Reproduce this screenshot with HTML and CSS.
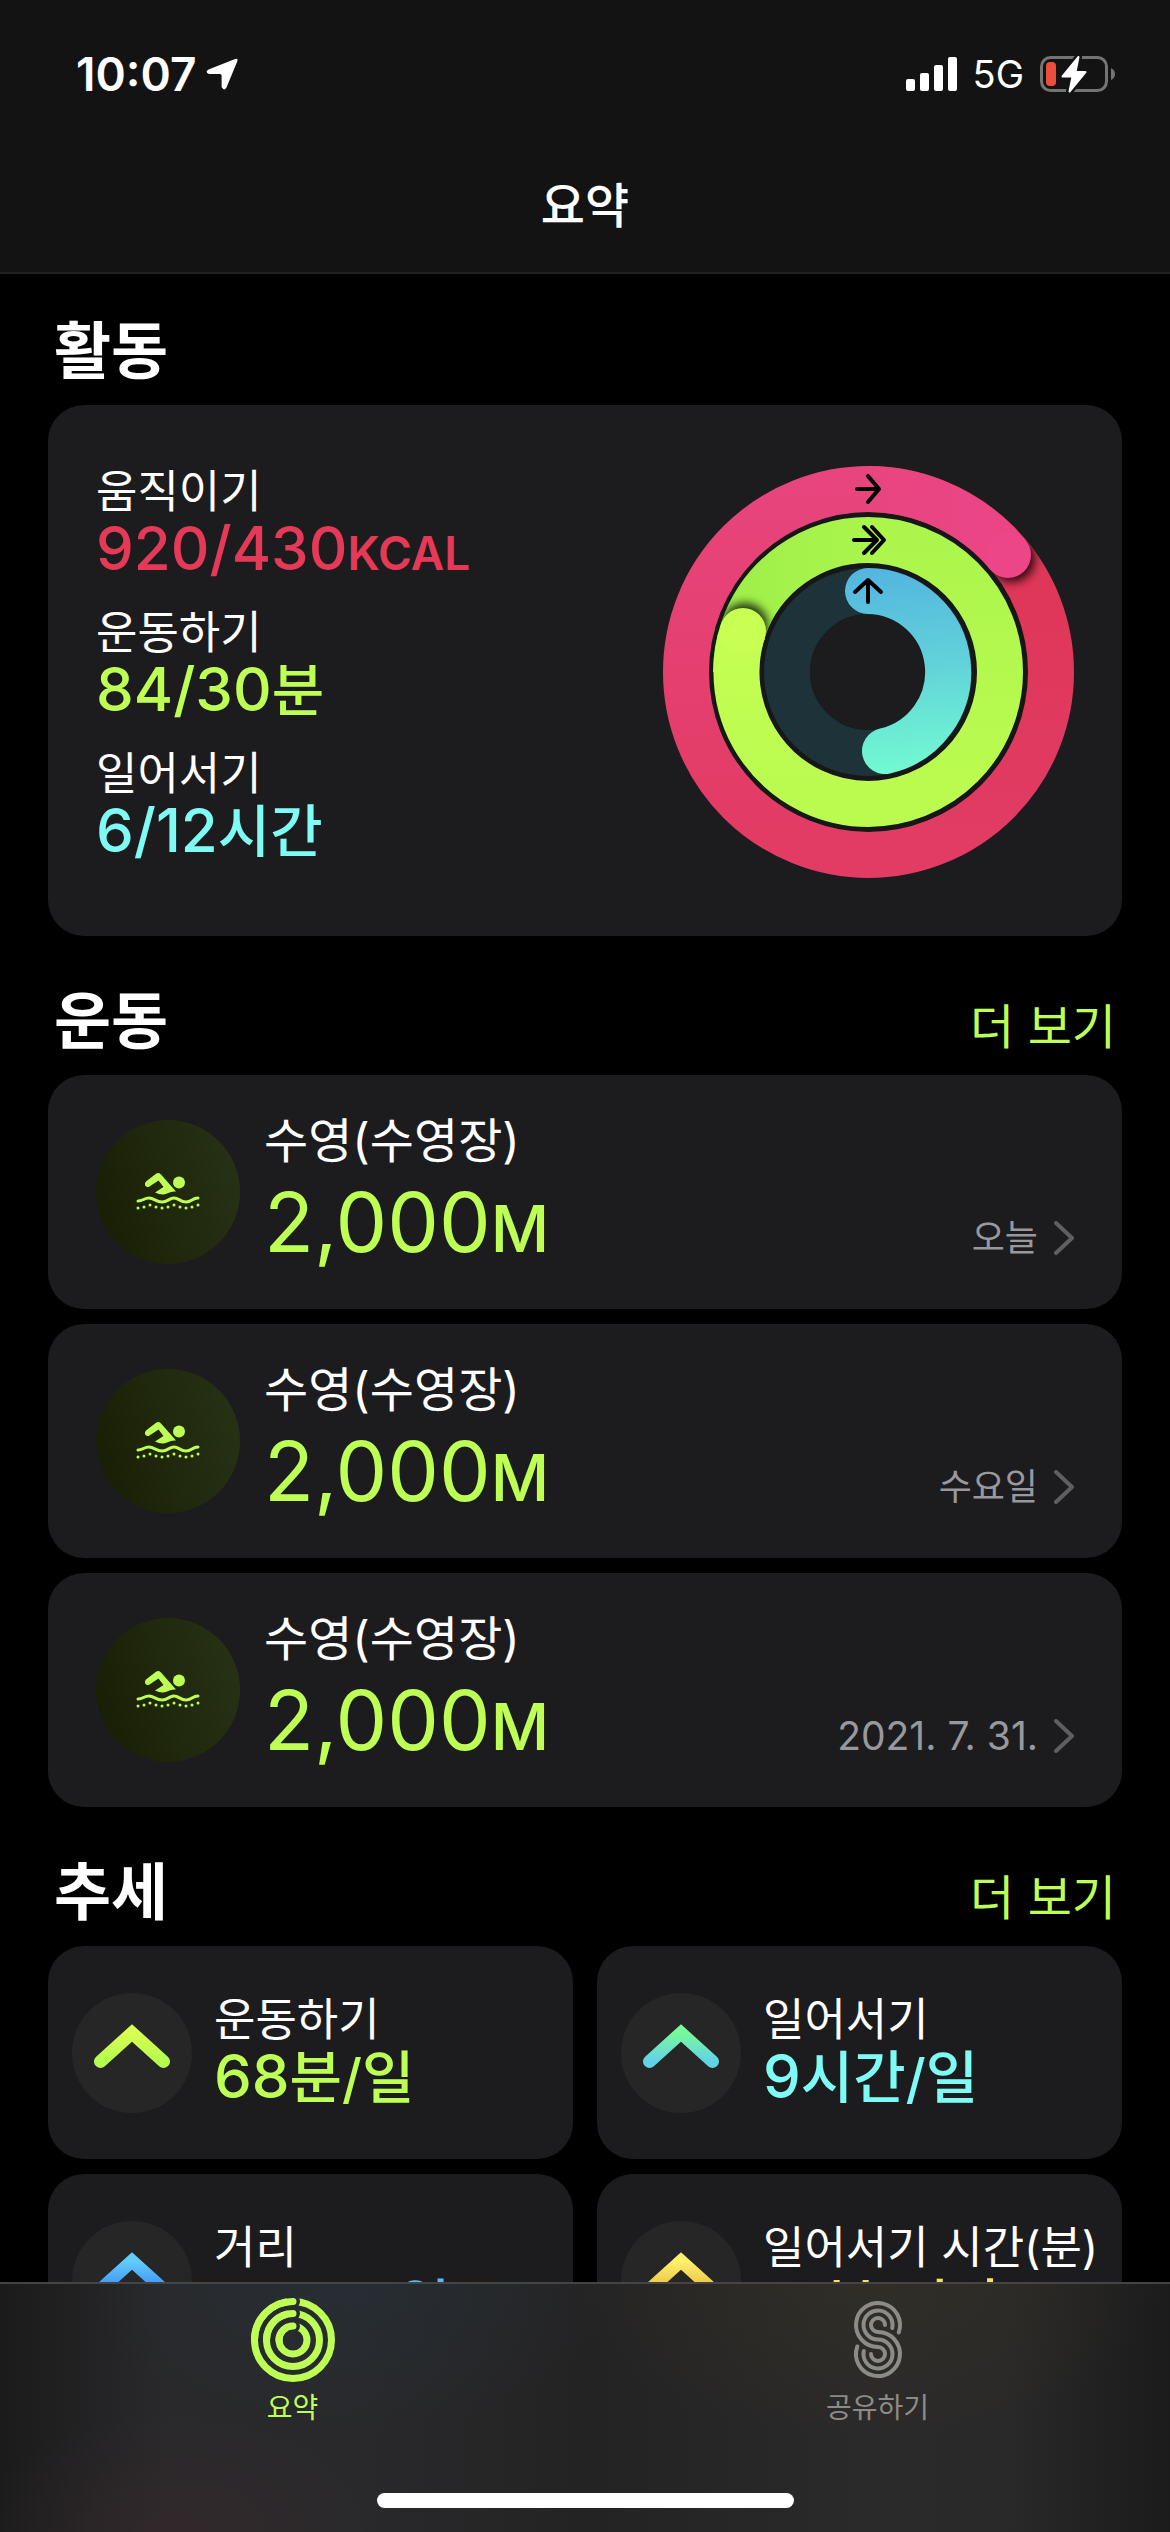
FILE: index.html
```html
<!DOCTYPE html>
<html lang="ko">
<head>
<meta charset="utf-8">
<meta name="viewport" content="width=device-width, initial-scale=1">
<title>요약</title>
<link rel="stylesheet" href="styles.css">
</head>
<body>
<svg class="defs" aria-hidden="true">
  <defs>
    <symbol id="swim" viewBox="0 0 64 40">
      <g fill="none" stroke="currentColor" stroke-linecap="round">
        <path d="M2 29 C7 29 8 26 13 26 S20 30 26 30 S33 26 38 26 S44 30 50 30 S56 26 62 26" stroke-width="3"/>
        <path d="M2 36h0M8 35h0M14 33h0M20 35h0M26 36h0M32 35h0M38 33h0M44 35h0M50 36h0M56 35h0M62 33h0" stroke-width="3"/>
      </g>
      <circle cx="43" cy="10.500" r="6" fill="currentColor"/>
      <path d="M10 9.500 L20 1.800 Q22.500 0 25 2.500 L40 19.500 Q36 19 31 21.500 T19 20.500 L27.500 15 L22.500 8.500 L13.500 14.500 Q10 16 9 13 Q8.500 11 10 9.500Z" fill="currentColor"/>
    </symbol>
    <symbol id="chevron" viewBox="0 0 20 34">
      <path d="M2 2L18 17L2 32" fill="none" stroke="currentColor" stroke-width="4" stroke-linecap="round" stroke-linejoin="round"/>
    </symbol>
    <linearGradient id="lime" x1="0" y1="0" x2="0" y2="1"><stop offset="0" stop-color="#d8ff52"/><stop offset="1" stop-color="#b4fa50"/></linearGradient>
    <linearGradient id="aqua" x1="0" y1="0" x2="0" y2="1"><stop offset="0" stop-color="#78f99a"/><stop offset="1" stop-color="#62d2e8"/></linearGradient>
    <linearGradient id="blue" x1="0" y1="0" x2="0" y2="1"><stop offset="0" stop-color="#60cdfa"/><stop offset="1" stop-color="#3f8cf5"/></linearGradient>
    <linearGradient id="gold" x1="0" y1="0" x2="0" y2="1"><stop offset="0" stop-color="#fff06c"/><stop offset="1" stop-color="#e8c040"/></linearGradient>
  </defs>
</svg>

<div class="app">
  <header class="top">
    <div class="status">
      <div class="status-side">
        <span class="clock">10:07</span>
        <svg class="locate" viewBox="0 0 32 32"><path d="M28.500 1.200Q32.500 -.5 31.200 3.500L20.500 29.500Q18 33.500 15.600 29V17.500Q15.600 16 14 16H3Q-1.500 14 2.500 11.500Z" fill="#fff"/></svg>
      </div>
      <div class="status-side">
        <svg class="signal" viewBox="0 0 51 34" fill="#fff"><rect x="0" y="22" width="9" height="12" rx="2"/><rect x="14" y="16" width="9" height="18" rx="2"/><rect x="28" y="8" width="9" height="26" rx="2"/><rect x="42" y="0" width="9" height="34" rx="2"/></svg>
        <span class="network">5G</span>
        <svg class="battery" viewBox="0 0 76 40">
          <rect x="1.500" y="3.500" width="65" height="33" rx="9" fill="none" stroke="#747474" stroke-width="3"/>
          <path d="M71 14Q75 16 75 20T71 26Z" fill="#747474"/>
          <rect x="6" y="8" width="10" height="24" rx="4" fill="#eb4e3d"/>
          <path d="M38.500 3L22.500 22.500H32.500L29.500 37.500L45.500 18H35.500Z" fill="#131313" stroke="#131313" stroke-width="7" stroke-linejoin="round"/>
          <path d="M38.500 3L22.500 22.500H32.500L29.500 37.500L45.500 18H35.500Z" fill="#fff" stroke="#fff" stroke-width="2" stroke-linejoin="round"/>
        </svg>
      </div>
    </div>
    <h1 class="title">요약</h1>
  </header>

  <main class="content">
    <section class="section">
      <div class="section-head"><h2>활동</h2></div>
      <article class="card activity">
        <dl class="metrics">
          <div class="metric"><dt>움직이기</dt><dd class="move">920/430<span class="unit">KCAL</span></dd></div>
          <div class="metric"><dt>운동하기</dt><dd class="exercise">84/30<span class="ko">분</span></dd></div>
          <div class="metric"><dt>일어서기</dt><dd class="stand">6/12<span class="ko">시간</span></dd></div>
        </dl>
        <svg class="rings" viewBox="21 26 412 412" role="img" aria-label="활동 링">
          <defs>
            <linearGradient id="m1" gradientUnits="userSpaceOnUse" x1="0" y1="100" x2="0" y2="392"><stop offset="0" stop-color="#de3656"/><stop offset="1" stop-color="#e23b64"/></linearGradient>
            <linearGradient id="m2" gradientUnits="userSpaceOnUse" x1="0" y1="26" x2="0" y2="392"><stop offset="0" stop-color="#e8457f"/><stop offset="1" stop-color="#e23b64"/></linearGradient>
            <linearGradient id="m3" gradientUnits="userSpaceOnUse" x1="227" y1="0" x2="390" y2="0"><stop offset="0" stop-color="#e8457f"/><stop offset="1" stop-color="#ec4588"/></linearGradient>
            <linearGradient id="e1" gradientUnits="userSpaceOnUse" x1="0" y1="77" x2="0" y2="341"><stop offset="0" stop-color="#aaf54c"/><stop offset="1" stop-color="#bbfb50"/></linearGradient>
            <linearGradient id="e2" gradientUnits="userSpaceOnUse" x1="0" y1="170" x2="0" y2="341"><stop offset="0" stop-color="#c7ff53"/><stop offset="1" stop-color="#bbfb50"/></linearGradient>
            <linearGradient id="e3" gradientUnits="userSpaceOnUse" x1="90" y1="0" x2="227" y2="0"><stop offset="0" stop-color="#9fef4a"/><stop offset="1" stop-color="#aaf54c"/></linearGradient>
            <linearGradient id="s1" gradientUnits="userSpaceOnUse" x1="227" y1="128" x2="244" y2="334"><stop offset="0" stop-color="#53b5e0"/><stop offset=".5" stop-color="#62d3d9"/><stop offset="1" stop-color="#72fad2"/></linearGradient>
            <clipPath id="c1"><path clip-rule="evenodd" d="M227 26a206 206 0 1 1 0 412a206 206 0 1 1 0-412ZM227 72a160 160 0 1 0 0 320a160 160 0 1 0 0-320Z"/></clipPath>
            <clipPath id="c2"><path clip-rule="evenodd" d="M227 77a155 155 0 1 1 0 310a155 155 0 1 1 0-310ZM227 123a109 109 0 1 0 0 218a109 109 0 1 0 0-218Z"/></clipPath>
            <filter id="soft" x="-50%" y="-50%" width="200%" height="200%"><feGaussianBlur stdDeviation="5"/></filter>
          </defs>
          <circle cx="227" cy="232" r="165" fill="#171717"/>
          <circle cx="227" cy="232" r="58" fill="#1c1c1e"/>
          <g fill="none" stroke-width="46">
            <path d="M227 49A183 183 0 0 1 227 415" stroke="url(#m1)"/>
            <g clip-path="url(#c1)"><circle cx="371" cy="119" r="23" fill="#000" stroke="none" opacity=".8" filter="url(#soft)"/></g>
            <path d="M228 415A183 183 0 0 1 228 49" stroke="url(#m2)"/>
            <path d="M227 49A183 183 0 0 1 367 115" stroke="url(#m3)"/>
            <circle cx="367" cy="115" r="23" fill="#ec4588" stroke="none"/>
            <path d="M102 190A132 132 0 0 1 228 100" stroke="url(#e3)"/>
            <path d="M95 232A132 132 0 0 1 102 190" stroke="#9fef4a"/>
            <g clip-path="url(#c2)"><circle cx="104" cy="186" r="23" fill="#000" stroke="none" opacity=".8" filter="url(#soft)"/></g>
            <path d="M227 100A132 132 0 0 1 227 364" stroke="url(#e1)"/>
            <path d="M228 364A132 132 0 0 1 102 191" stroke="url(#e2)"/>
            <circle cx="102" cy="191" r="23" fill="#c7ff53" stroke="none"/>
            <circle cx="227" cy="232" r="81" stroke="#1e3239"/>
            <path d="M227 151A81 81 0 0 1 244 311" stroke="url(#s1)" stroke-linecap="round"/>
          </g>
          <g fill="none" stroke="#000" stroke-width="4" stroke-linecap="round" stroke-linejoin="round">
            <path d="M216 49H238M227 36L238 49L227 62"/>
            <path d="M213 100H236M223 87L236 100L223 113M231 87L243 100L231 113"/>
            <path d="M227 162V140M214 152L227 140L240 152"/>
          </g>
        </svg>
      </article>
    </section>

    <section class="section">
      <div class="section-head"><h2>운동</h2><a class="more" href="#workouts">더 보기</a></div>
      <div class="stack">
        <a class="card workout" href="#w1">
          <span class="badge"><svg class="swim"><use href="#swim"/></svg></span>
          <span class="workout-text"><span class="name">수영(수영장)</span><span class="distance">2,000<span class="distance-unit">M</span></span></span>
          <span class="when">오늘<svg class="chevron"><use href="#chevron"/></svg></span>
        </a>
        <a class="card workout" href="#w2">
          <span class="badge"><svg class="swim"><use href="#swim"/></svg></span>
          <span class="workout-text"><span class="name">수영(수영장)</span><span class="distance">2,000<span class="distance-unit">M</span></span></span>
          <span class="when">수요일<svg class="chevron"><use href="#chevron"/></svg></span>
        </a>
        <a class="card workout" href="#w3">
          <span class="badge"><svg class="swim"><use href="#swim"/></svg></span>
          <span class="workout-text"><span class="name">수영(수영장)</span><span class="distance">2,000<span class="distance-unit">M</span></span></span>
          <span class="when"><time datetime="2021-07-31">2021. 7. 31.</time><svg class="chevron"><use href="#chevron"/></svg></span>
        </a>
      </div>
    </section>

    <section class="section">
      <div class="section-head"><h2>추세</h2><a class="more" href="#trends">더 보기</a></div>
      <div class="trends">
        <article class="card trend">
          <span class="dial"><svg class="arrow" viewBox="0 0 76 46"><path d="M6.500 37.500L38 9L69.500 37.500" stroke="url(#lime)"/></svg></span>
          <div class="trend-text"><h3>운동하기</h3><p class="exercise">68<span class="ko">분</span><span class="slash">/</span><span class="ko">일</span></p></div>
        </article>
        <article class="card trend">
          <span class="dial"><svg class="arrow" viewBox="0 0 76 46"><path d="M6.500 37.500L38 9L69.500 37.500" stroke="url(#aqua)"/></svg></span>
          <div class="trend-text"><h3>일어서기</h3><p class="stand">9<span class="ko">시간</span><span class="slash">/</span><span class="ko">일</span></p></div>
        </article>
        <article class="card trend">
          <span class="dial"><svg class="arrow" viewBox="0 0 76 46"><path d="M6.500 37.500L38 9L69.500 37.500" stroke="url(#blue)"/></svg></span>
          <div class="trend-text"><h3>거리</h3><p class="range">4.8<span class="unit">KM/</span><span class="ko">일</span></p></div>
        </article>
        <article class="card trend">
          <span class="dial"><svg class="arrow" viewBox="0 0 76 46"><path d="M6.500 37.500L38 9L69.500 37.500" stroke="url(#gold)"/></svg></span>
          <div class="trend-text"><h3>일어서기 시간(분)</h3><p class="minutes">12<span class="ko">분</span><span class="slash">/</span><span class="ko">시간</span></p></div>
        </article>
      </div>
    </section>
  </main>

  <nav class="tabs">
    <a class="tab current" href="#summary" aria-current="page">
      <svg class="tab-icon" viewBox="0 0 84 84" fill="none" stroke="currentColor" stroke-width="7">
        <mask id="gap" maskUnits="userSpaceOnUse" x="0" y="0" width="84" height="84"><path d="M0 0H84V84H0Z" fill="#fff" stroke="none"/><g fill="#000" stroke="none"><circle cx="42" cy="3.500" r="7"/><circle cx="42" cy="15.500" r="7"/><circle cx="42" cy="28" r="7"/></g></mask>
        <g mask="url(#gap)"><circle cx="42" cy="42" r="38.500"/><circle cx="42" cy="42" r="26.500"/><circle cx="42" cy="42" r="14"/></g>
        <path stroke-linecap="round" d="M42 3.500A38.500 38.500 0 0 0 3.500 42M42 15.500A26.500 26.500 0 0 0 15.500 42M42 28A14 14 0 0 0 28 42"/>
      </svg>
      <span>요약</span>
    </a>
    <a class="tab" href="#sharing">
      <svg class="tab-icon" viewBox="-18 -3 84 84" fill="none" stroke="currentColor" stroke-width="4" stroke-linecap="round">
        <path d="M44.700 31.500A22 22 0 1 0 24 46A7 7 0 1 1 17 53M38.200 27A14.500 14.500 0 1 0 24 38.500A14.500 14.500 0 1 1 9.800 50M31 24A7 7 0 1 0 24 31A22 22 0 1 1 3.300 45.500"/>
      </svg>
      <span>공유하기</span>
    </a>
    <div class="home-bar"></div>
  </nav>
</div>
</body>
</html>
```
FILE: styles.css
```css
* { box-sizing: border-box; }

body {
  margin: 0;
  background: #000;
  color: #fff;
  font-family: Inter, "Noto Sans CJK KR", sans-serif;
}

h1, h2, h3, p, dl, dd { margin: 0; }
a { color: inherit; text-decoration: none; }
svg { display: block; flex: none; }
.defs { position: absolute; width: 0; height: 0; }

.app { display: flex; flex-direction: column; height: 100vh; }

/* header */
.top {
  flex: none;
  background: #131313;
  border-bottom: 2px solid #222;
}
.status {
  display: flex;
  justify-content: space-between;
  align-items: center;
  height: 148px;
  padding: 0 54px 0 76px;
}
.status-side { display: flex; align-items: center; }
.clock { font-size: 46px; font-weight: 600; line-height: 56px; }
.locate { width: 32px; height: 32px; margin-left: 10px; }
.signal { width: 51px; height: 34px; margin-right: 16px; }
.network { font-size: 38px; font-weight: 400; line-height: 48px; }
.battery { width: 76px; height: 40px; margin-left: 16px; }
.title {
  height: 124px;
  font-size: 48px;
  font-weight: 500;
  line-height: 116px;
  text-align: center;
}

/* content */
.content {
  flex: 1;
  min-height: 0;
  overflow-y: auto;
  scrollbar-width: none;
  padding: 37px 48px 48px;
}
.section + .section { margin-top: 45px; }
.section-head {
  display: flex;
  justify-content: space-between;
  align-items: baseline;
  padding: 0 6px 12px;
}
h2 { font-size: 62px; font-weight: 700; line-height: 82px; }
.more { color: #bdff55; font-size: 48px; line-height: 60px; }
.card { background: #1c1c1e; border-radius: 36px; }

.move { color: #e43a57; }
.exercise { color: #bdff55; }
.stand { color: #7dfbf4; }
.range { color: #5db8f5; }
.minutes { color: #f8e45c; }

.activity {
  display: flex;
  justify-content: space-between;
  padding: 61px 48px 58px;
}
.metrics { display: flex; flex-direction: column; gap: 29px; }
dt, h3 { font-size: 45px; font-weight: 400; line-height: 52px; }
dd, .trend p { font-size: 60px; font-weight: 500; line-height: 60px; }
.unit, .slash, .ko { line-height: 0; }
.unit { font-size: 46px; font-weight: 600; }
.slash { font-size: 54px; }
.ko { font-size: 57px; }
.rings { width: 412px; height: 412px; }

.stack { display: flex; flex-direction: column; gap: 15px; }
.workout {
  display: flex;
  align-items: center;
  height: 234px;
  padding: 0 48px;
}
.badge {
  display: grid;
  place-items: center;
  flex: none;
  width: 144px;
  height: 144px;
  margin-right: 24px;
  border-radius: 50%;
  background: linear-gradient(75deg, #181d04, #283316);
  color: #bdff55;
}
.swim { width: 64px; height: 40px; }
.workout-text { display: flex; flex-direction: column; flex: 1; }
.name { font-size: 48px; line-height: 68px; }
.distance { color: #bdff55; font-size: 82px; line-height: 96px; }
.distance-unit { font-size: 64px; font-weight: 500; }
.when {
  display: flex;
  align-items: center;
  gap: 16px;
  margin-top: 92px;
  color: #98989d;
  font-size: 36px;
  line-height: 44px;
}
.when time { font-size: 39px; }
.chevron { width: 20px; height: 34px; color: #5f5f63; }

.trends {
  display: grid;
  grid-template-columns: 1fr 1fr;
  gap: 15px 24px;
}
.trend {
  display: flex;
  align-items: center;
  gap: 22px;
  height: 213px;
  padding-left: 24px;
  white-space: nowrap;
}
.trend-text { padding-bottom: 6px; }
.dial {
  display: grid;
  place-items: start center;
  flex: none;
  width: 120px;
  height: 120px;
  padding-top: 31px;
  border-radius: 50%;
  background: #262626;
}
.arrow {
  width: 76px;
  height: 46px;
  fill: none;
  stroke-width: 13px;
  stroke-linecap: round;
}

/* tab bar */
.tabs {
  display: grid;
  grid-template-columns: 1fr 1fr;
  grid-template-rows: 1fr auto;
  flex: none;
  height: 250px;
  padding: 14px 0 24px;
  border-top: 2px solid #444445;
  background:
    radial-gradient(ellipse 260px 150px at 30% 0, #25303899, transparent),
    radial-gradient(ellipse 300px 150px at 74% 0, #33302499, transparent),
    radial-gradient(ellipse 200px 120px at 15% 100%, #37282b99, transparent),
    linear-gradient(90deg, #1b1b1c, #29292b 14%, #29292b 30%, #242324 50%, #2b2a2a 74%, #2a2929 86%, #1b1b1c);
}
.tab {
  display: flex;
  flex-direction: column;
  align-items: center;
  gap: 10px;
  color: #8b8b88;
  font-size: 28px;
  line-height: 32px;
}
.tab.current { color: #bdff55; }
.tab-icon { width: 84px; height: 84px; }
.home-bar {
  grid-column: 1 / -1;
  justify-self: center;
  width: 417px;
  height: 15px;
  border-radius: 8px;
  background: #fff;
}
```
